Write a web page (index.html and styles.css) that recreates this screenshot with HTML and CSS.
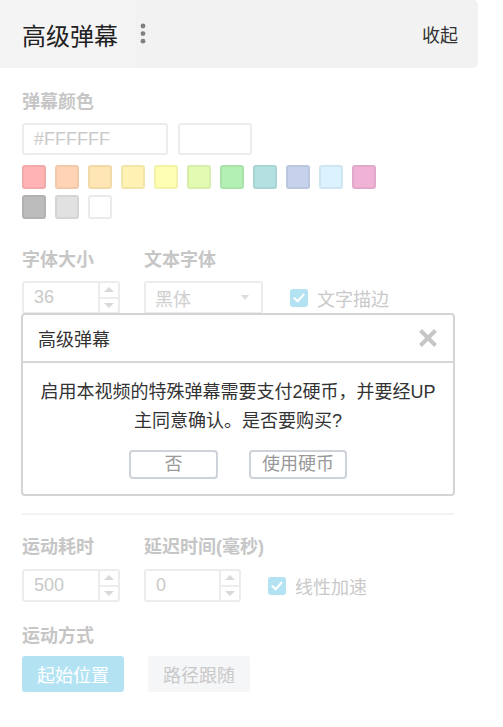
FILE: index.html
```html
<!DOCTYPE html>
<html lang="zh-CN">
<head>
<meta charset="utf-8">
<title>高级弹幕</title>
<link rel="stylesheet" href="styles.css">
</head>
<body>
<div class="panel">
  <header class="bar">
    <div class="bar-left">
      <div class="bar-title">高级弹幕</div>
      <svg class="dots" width="6" height="22" viewBox="0 0 6 22"><circle cx="3" cy="3" r="2.4"/><circle cx="3" cy="10.6" r="2.4"/><circle cx="3" cy="18.2" r="2.4"/></svg>
    </div>
    <button class="fold">收起</button>
  </header>

  <div class="content">
    <section class="group first">
      <h3 class="label">弹幕颜色</h3>
      <div class="color-inputs">
        <div class="box hex">#FFFFFF</div>
        <div class="box preview"></div>
      </div>
      <ul class="swatches">
        <li class="swatch c1"></li><li class="swatch c2"></li><li class="swatch c3"></li><li class="swatch c4"></li>
        <li class="swatch c5"></li><li class="swatch c6"></li><li class="swatch c7"></li><li class="swatch c8"></li>
        <li class="swatch c9"></li><li class="swatch c10"></li><li class="swatch c11"></li><li class="swatch c12"></li>
        <li class="swatch c13"></li><li class="swatch c14"></li>
      </ul>
    </section>

    <section class="group">
      <div class="fields">
        <div class="field w-num">
          <h3 class="label">字体大小</h3>
          <div class="box num"><span class="num-val">36</span><span class="spin"><span><i class="up"></i></span><span><i class="down"></i></span></span></div>
        </div>
        <div class="field w-sel">
          <h3 class="label">文本字体</h3>
          <div class="box select"><span>黑体</span><i class="down"></i></div>
        </div>
        <label class="check"><span class="tick"><svg width="12" height="10" viewBox="0 0 12 10"><path d="M1.5 5.2 4.6 8.2 10.5 1.8" fill="none" stroke="#fff" stroke-width="2.2" stroke-linecap="round" stroke-linejoin="round"/></svg></span>文字描边</label>
      </div>
    </section>

    <section class="group hidden-group">
      <div class="box textarea"></div>
    </section>

    <hr class="rule">

    <section class="group after-rule">
      <div class="fields">
        <div class="field w-num">
          <h3 class="label nowrap">运动耗时</h3>
          <div class="box num"><span class="num-val">500</span><span class="spin"><span><i class="up"></i></span><span><i class="down"></i></span></span></div>
        </div>
        <div class="field w-num2">
          <h3 class="label nowrap">延迟时间(毫秒)</h3>
          <div class="box num"><span class="num-val">0</span><span class="spin"><span><i class="up"></i></span><span><i class="down"></i></span></span></div>
        </div>
        <label class="check"><span class="tick"><svg width="12" height="10" viewBox="0 0 12 10"><path d="M1.5 5.2 4.6 8.2 10.5 1.8" fill="none" stroke="#fff" stroke-width="2.2" stroke-linecap="round" stroke-linejoin="round"/></svg></span>线性加速</label>
      </div>
    </section>

    <section class="group modes-group">
      <h3 class="label modes-label">运动方式</h3>
      <div class="modes">
        <button class="mode active">起始位置</button>
        <button class="mode">路径跟随</button>
      </div>
    </section>
  </div>

  <div class="dialog">
    <div class="dialog-head">
      <span>高级弹幕</span>
      <svg class="close" width="20" height="18" viewBox="0 0 20 18"><path d="M2.5 1.5 17.5 16.5M17.5 1.5 2.5 16.5" stroke="#c6c6c6" stroke-width="4"/></svg>
    </div>
    <div class="dialog-body">
      <p>启用本视频的特殊弹幕需要支付2硬币，并要经UP<br>主同意确认。是否要购买?</p>
      <div class="dialog-actions">
        <button class="dbtn no">否</button>
        <button class="dbtn">使用硬币</button>
      </div>
    </div>
  </div>
</div>
</body>
</html>
```

FILE: styles.css
```css
* { box-sizing: border-box; margin: 0; padding: 0; }

body {
  font-family: "Liberation Sans", "Noto Sans CJK SC", sans-serif;
  background: #fff;
  width: 503px;
  height: 727px;
  overflow: hidden;
}

.panel { position: relative; width: 478px; }

/* header */
.bar {
  height: 68px;
  display: flex;
  align-items: center;
  justify-content: space-between;
  background: #f2f2f3;
  border-radius: 0 5px 5px 0;
}
.bar-left { display: flex; align-items: center; height: 100%; }
.bar-title {
  width: 135px;
  height: 100%;
  display: flex;
  align-items: center;
  padding-left: 22px;
  background: #f4f4f5;
  font-size: 24px;
  color: #222;
}
.dots { fill: #808080; margin-left: 5px; }
.fold {
  font-family: inherit;
  font-size: 18px;
  color: #333;
  background: none;
  border: 0;
  margin-right: 20px;
}

/* content (disabled look) */
.content { padding: 22px 24px 0 22px; }

.group + .group { margin-top: 22px; }
.group.first + .group { margin-top: 29px; }
.group.hidden-group { margin-top: 55px; }
.group.after-rule { margin-top: 20px; }
.group.modes-group { margin-top: 22px; }

.label {
  font-size: 18px;
  line-height: 24px;
  font-weight: 700;
  color: #c6c6c6;
  margin-bottom: 9px;
}
.nowrap { white-space: nowrap; }
.modes-label { margin-bottom: 8px; }
.after-rule .label { margin-bottom: 10px; }

.box {
  border: 2px solid #ececec;
  border-radius: 3px;
  background: #fff;
}

.color-inputs { display: flex; gap: 10px; }
.hex {
  width: 146px;
  height: 32px;
  padding-left: 10px;
  font-size: 18px;
  line-height: 28px;
  color: #cacaca;
}
.preview { width: 74px; height: 32px; }

.swatches {
  list-style: none;
  display: grid;
  grid-template-columns: repeat(11, 24px);
  gap: 6px 9px;
  margin-top: 10px;
}
.swatch {
  width: 24px;
  height: 24px;
  border-radius: 3px;
  border: 2px solid rgba(0, 0, 0, 0.05);
}
.c1 { background: #ffb3b3; }
.c2 { background: #ffd4b4; }
.c3 { background: #ffe5b3; }
.c4 { background: #fff2b3; }
.c5 { background: #ffffb3; }
.c6 { background: #e3fab3; }
.c7 { background: #b3f0b3; }
.c8 { background: #b3e0e0; }
.c9 { background: #c6d1eb; }
.c10 { background: #dbf2ff; }
.c11 { background: #f0b3d5; }
.c12 { background: #bcbcbc; }
.c13 { background: #e1e1e1; }
.c14 { background: #fff; border-color: #ebebeb; }

/* field rows */
.fields { display: flex; align-items: flex-end; gap: 24px; }
.w-num { width: 98px; }
.w-num2 { width: 97px; }
.w-sel { width: 119px; }

.num {
  display: flex;
  width: 100%;
  height: 33px;
}
.num-val {
  flex: 1;
  padding-left: 10px;
  font-size: 18px;
  line-height: 29px;
  color: #c9c9c9;
}
.spin {
  width: 20px;
  border-left: 2px solid #ececec;
  display: flex;
  flex-direction: column;
}
.spin > span {
  flex: 1;
  display: flex;
  align-items: center;
  justify-content: center;
}
.spin > span + span { border-top: 2px solid #ececec; }

.up, .down {
  display: block;
  width: 0;
  height: 0;
  border-left: 5px solid transparent;
  border-right: 5px solid transparent;
}
.up { border-bottom: 5px solid #d9d9d9; }
.down { border-top: 5px solid #d9d9d9; }

.select {
  width: 100%;
  height: 33px;
  display: flex;
  align-items: center;
  justify-content: space-between;
  padding: 0 12px 0 9px;
  font-size: 18px;
  color: #cfcfcf;
}
.select .down { border-left-width: 4px; border-right-width: 4px; border-top-width: 5px; border-top-color: #dcdcdc; }

.check {
  display: flex;
  align-items: center;
  gap: 9px;
  height: 33px;
  margin-left: 3px;
  font-size: 18px;
  color: #c9c9c9;
  white-space: nowrap;
}
.tick {
  width: 18px;
  height: 18px;
  border-radius: 3px;
  background: #b3e3f3;
  display: flex;
  align-items: center;
  justify-content: center;
}

.textarea { height: 122px; }

.rule {
  border: 0;
  height: 2px;
  background: #f3f3f3;
  margin-top: 22px;
}

.modes { display: flex; gap: 24px; }
.mode {
  width: 102px;
  height: 36px;
  border: 0;
  border-radius: 3px;
  font-family: inherit;
  font-size: 18px;
  background: #f5f6f8;
  color: #c9c9c9;
}
.mode.active { background: #b3e3f3; color: #fff; }

/* dialog overlay */
.dialog {
  position: absolute;
  left: 21px;
  top: 313px;
  width: 434px;
  background: #fff;
  border: 2px solid #d4d4d4;
  border-radius: 4px;
}
.dialog-head {
  height: 48px;
  display: flex;
  align-items: center;
  justify-content: space-between;
  padding: 0 15px;
  border-bottom: 2px solid #d6d6d6;
  font-size: 18px;
  color: #333;
}
.dialog-body {
  padding: 15px 15px 15px;
  text-align: center;
  font-size: 18px;
  line-height: 29px;
  color: #333;
}
.dialog-actions {
  display: flex;
  justify-content: center;
  gap: 31px;
  margin-top: 14px;
}
.dbtn {
  height: 29px;
  min-width: 89px;
  padding: 0 11px;
  border: 2px solid #ced2d9;
  border-radius: 4px;
  background: #fff;
  color: #999;
  font-family: inherit;
  font-size: 18px;
  line-height: 25px;
}
```
